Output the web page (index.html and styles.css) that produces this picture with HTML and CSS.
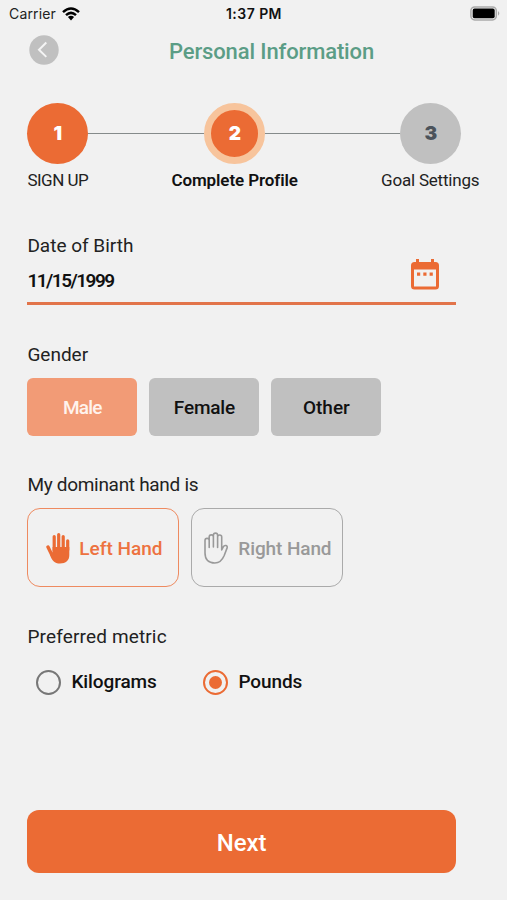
FILE: index.html
```html
<!DOCTYPE html>
<html lang="en">
<head>
<meta charset="utf-8">
<title>Personal Information</title>
<link rel="stylesheet" href="styles.css">
</head>
<body>
<div class="status">
  <div class="status-left"><span class="carrier">Carrier</span>
    <svg class="wifi" width="18" height="14" viewBox="0 0 18 14" fill="none" stroke="#000" stroke-width="2.5"><path d="M1 5.100Q9-2 17 5.100M4 8.100Q9 3.600 14 8.100"/><path d="M5.900 10Q9 7.400 12.100 10L9 13.400Z" fill="#000" stroke="none"/></svg>
  </div>
  <span class="time">1:37 PM</span>
  <svg class="battery" width="31" height="15" viewBox="0 0 31 15"><rect x=".9" y=".9" width="25.4" height="13" rx="3.8" fill="#f1f1f1" stroke="#aaa" stroke-width="1.5"/><rect x="2.7" y="2.6" width="22" height="9.6" rx="1.8"/><path d="M28 5q2.600 2.400 0 4.800z" fill="#aaa"/></svg>
</div>
<header class="header">
  <button class="back" aria-label="Back"><svg width="30" height="30" viewBox="0 0 30 30" fill="none"><circle cx="15" cy="15" r="14.7" fill="#c0c0c0"/><path d="M17.300 7.500 10 14.700l7.300 7.200" stroke="#f4f4f4" stroke-width="2"/></svg></button>
  <h1 class="title">Personal Information</h1>
</header>
<main class="content">
  <section class="stepper">
    <div class="circles">
      <span class="circle done">1</span><span class="line"></span><span class="circle current">2</span><span class="line second"></span><span class="circle todo">3</span>
    </div>
    <div class="labels"><span class="signup">SIGN UP</span><b class="profile">Complete Profile</b><span class="goals">Goal Settings</span></div>
  </section>
  <section class="birth">
    <div>
      <div class="label">Date of Birth</div>
      <div class="date">11/15/1999</div>
    </div>
    <svg class="calendar" width="28" height="32" viewBox="0 0 28 32" fill="#eb6b34"><path d="M5 1h3v3h12V1h3v3h1.500a3.500 3.500 0 0 1 3.500 3.500v20.500a3.500 3.500 0 0 1-3.500 3.500h-21a3.500 3.500 0 0 1-3.500-3.500V7.500a3.500 3.500 0 0 1 3.500-3.500H5zM3 11.500v17h22v-17z" fill-rule="evenodd"/><path d="M6 14.500h3.200v3.200H6zM12.300 14.500h3.200v3.200h-3.200zM18.600 14.500h3.200v3.200h-3.200z"/></svg>
  </section>
  <section class="gender">
    <div class="label">Gender</div>
    <div class="options"><button class="option selected">Male</button><button class="option female">Female</button><button class="option">Other</button></div>
  </section>
  <section class="hand">
    <div class="label tight">My dominant hand is</div>
    <div class="options">
      <button class="card active"><svg width="24" height="32" viewBox="0 0 24 32" fill="none" stroke="#eb6b34" stroke-linecap="round"><path d="M8.200 19V4.500M12.700 18V2.500M17.200 18V4.500M21.700 18V8.800" stroke-width="3.200"/><path d="M2 15 5.400 22" stroke-width="3.400"/><path d="M6.600 15H23.300V23C23.300 28.500 20 31.500 14 31.500C8.500 31.500 5.800 28.500 3.900 22.700L6.600 20Z" fill="#eb6b34" stroke="none"/></svg><span>Left Hand</span></button>
      <button class="card inactive"><svg width="25" height="32" viewBox="0 0 25 32" fill="none" stroke="#999" stroke-width="1.600" stroke-linecap="round" stroke-linejoin="round"><path d="M1 8.500a2.100 2.100 0 0 1 4.200 0V5a2.100 2.100 0 0 1 4.200 0V3.200a2.100 2.100 0 0 1 4.200 0V5a2.050 2.050 0 0 1 4.100 0V18L19.400 14.700C20.400 12.700 23.800 13.400 23.200 15.600L20.200 23.500C18 28.800 15.500 31 10.800 31C4.500 31 1 27.500 1 21ZM5.200 8V15.500M9.400 5V15M13.600 5V15.500"/></svg><span>Right Hand</span></button>
    </div>
  </section>
  <section class="metric">
    <div class="label loose">Preferred metric</div>
    <div class="radios"><label class="radio"><i class="dot"></i>Kilograms</label><label class="radio pounds"><i class="dot on"></i>Pounds</label></div>
  </section>
  <button class="next">Next</button>
</main>
</body>
</html>
```
FILE: styles.css
```css
* { box-sizing: border-box; }
body { margin: 0; width: 507px; height: 900px; overflow: hidden; background: #f1f1f1; color: #222; font-family: Roboto, "Liberation Sans", sans-serif; }
button { display: flex; align-items: center; justify-content: center; padding: 0; border: 0; background: none; font: 500 19px/24px Roboto, sans-serif; color: #111; }
svg { display: block; flex: none; }
.status { display: grid; grid-template-columns: 217px auto 1fr; align-items: center; height: 27px; padding: 0 6px 0 9px; font: 14px/20px Inter, sans-serif; color: #222; }
.status-left { display: flex; align-items: center; gap: 6px; }
.carrier { letter-spacing: .15px; }
.time { font-weight: 600; color: #111; letter-spacing: .45px; }
.battery { justify-self: end; }
.header { display: grid; grid-template-columns: 140px auto; height: 45px; padding: 8px 0 0 29px; }
.back { width: 30px; height: 30px; }
.title { margin: 3px 0 0; font-weight: 500; font-size: 22px; line-height: 28px; letter-spacing: -.13px; color: #5b9d86; }
.content { padding: 31px 27px 0 27.400px; }
.stepper { height: 89px; }
.circles { display: flex; align-items: center; width: 434px; }
.circle { width: 61px; height: 61px; border-radius: 50%; display: flex; align-items: center; justify-content: center; font-family: Inter, sans-serif; font-size: 19px; font-weight: 900; color: #fff; background: #eb6b34; }
.circle.current { border: 7px solid #f7c49c; }
.circle.todo { background: #c0c0c0; color: #4c535b; }
.line { width: 116px; height: 1px; background: #858b8b; }
.line.second { width: 135px; }
.labels { display: flex; justify-content: space-between; width: 452px; margin-top: 5px; font-size: 17px; line-height: 22px; }
.signup { letter-spacing: -.5px; }
.profile { font-weight: 600; color: #111; letter-spacing: -.1px; }
.goals { letter-spacing: -.2px; }
.label { font-size: 19px; line-height: 24px; }
.tight { letter-spacing: -.3px; }
.loose { letter-spacing: .15px; }
.birth { display: flex; justify-content: space-between; width: 428.500px; height: 71px; margin-top: 42px; padding-right: 17px; border-bottom: 3px solid #e2744a; }
.date { margin-top: 11px; font-size: 19px; line-height: 24px; font-weight: 600; letter-spacing: -1.500px; color: #111; }
.calendar { margin-top: 24px; }
.gender { margin-top: 38px; }
.options { display: flex; gap: 12px; margin-top: 11px; }
.option { width: 110px; height: 58px; padding-top: 2px; border-radius: 6px; background: #c0c0c0; }
.option.selected { background: #f29b76; color: #fff3ed; letter-spacing: -.8px; }
.option.female { letter-spacing: -.2px; }
.hand { margin-top: 37px; }
.card { width: 152px; height: 79px; border: 1.500px solid #ee8a60; border-radius: 13px; gap: 9px; padding-left: 2px; color: #ed7240; }
.card span { padding-top: 2px; }
.card.inactive { border-color: #aaa; padding-left: 1px; color: #999; letter-spacing: -.1px; }
.metric { margin-top: 38px; }
.radios { display: flex; margin: 20px 0 0 9px; }
.radio { display: flex; align-items: center; gap: 10px; width: 167px; font-size: 19px; font-weight: 500; line-height: 26px; color: #111; letter-spacing: -.1px; }
.dot { display: flex; align-items: center; justify-content: center; width: 25px; height: 25px; border-radius: 50%; border: 2.500px solid #777; }
.dot.on { border-color: #eb6b34; }
.dot.on::after { content: ""; width: 13px; height: 13px; border-radius: 50%; background: #eb6b34; }
.next { width: 428.500px; height: 63px; margin-top: 115px; padding-top: 2px; border-radius: 12px; background: #eb6b34; color: #fff; font-size: 24px; }
```
